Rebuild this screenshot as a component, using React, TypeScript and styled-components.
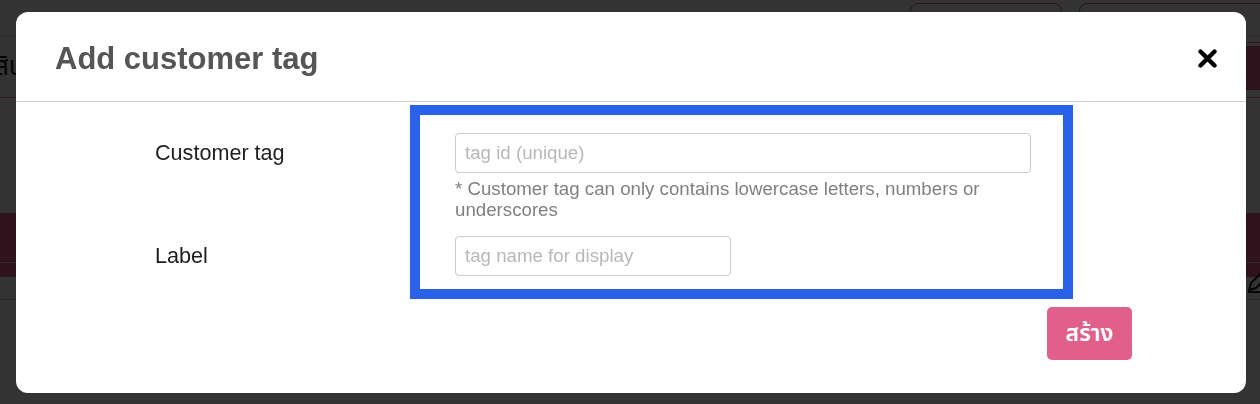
import React from "react";
import styled, { createGlobalStyle } from "styled-components";

// Global ------------------------------------------------------------------------

const GlobalStyle = createGlobalStyle`
  html, body {
    margin: 0;
    padding: 0;
    width: 1260px;
    height: 404px;
    overflow: hidden;
    background: #ffffff;
    font-family: "Liberation Sans", Arial, sans-serif;
  }
  * {
    box-sizing: border-box;
  }
`;

// Component ---------------------------------------------------------------------

const CloseIcon: React.FC = () => (
  <svg width="19" height="19" viewBox="0 0 19 19">
    <path d="M2.5 2.5 L16.5 16.5 M16.5 2.5 L2.5 16.5" stroke="#000" strokeWidth="4.4" strokeLinecap="round" />
  </svg>
);

const PenIcon: React.FC = () => (
  <svg width="24" height="24" viewBox="0 0 24 24" fill="none" stroke="#222" strokeWidth="2">
    <path d="M3 21 L5 14 L17 2 L22 7 L10 19 Z" />
    <path d="M2 23 H22" />
  </svg>
);

const App: React.FC = () => {
  return (
    <>
      <GlobalStyle />
      <Page>
        <TopBar>
          <OutlineButton width={152}>Export</OutlineButton>
          <OutlineButton width={190}>Import tags</OutlineButton>
        </TopBar>
        <Toolbar>
          <PageTitle>สินค้า</PageTitle>
          <PrimaryButton />
        </Toolbar>
        <Band />
        <TableRow>
          <span />
          <PenIcon />
        </TableRow>
        <BottomRow>
          <Cell width={520}>? ........ ...l..... Ud..l..</Cell>
          <Cell width={300}>NaplMo...ldBD</Cell>
        </BottomRow>
      </Page>

      <Overlay>
        <Modal>
          <Header>
            <Title>Add customer tag</Title>
            <CloseButton>
              <CloseIcon />
            </CloseButton>
          </Header>

          <Body>
            <Labels>
              <LabelRow>Customer tag</LabelRow>
              <LabelRow gap={63}>Label</LabelRow>
            </Labels>

            <Highlight>
              <Field>
                <Input width={576} placeholder="tag id (unique)" />
                <Help>* Customer tag can only contains lowercase letters, numbers or underscores</Help>
              </Field>
              <Field gap={16}>
                <Input width={276} placeholder="tag name for display" />
              </Field>
            </Highlight>
          </Body>

          <Footer>
            <SubmitButton>สร้าง</SubmitButton>
          </Footer>
        </Modal>
      </Overlay>
    </>
  );
};

export default App;

// Styled: page behind -------------------------------------------------------------

const Page = styled.div`
  width: 1260px;
  height: 404px;
  display: flex;
  flex-direction: column;
  background: #fff;
  color: #222;
`;

const TopBar = styled.div`
  height: 36px;
  display: flex;
  justify-content: flex-end;
  gap: 17px;
  padding: 3px 0 0;
  margin-right: -9px;
  border-bottom: 1px solid #e2e2e2;
`;

const OutlineButton = styled.div<{ width: number }>`
  width: ${({ width }) => width}px;
  height: 40px;
  border: 1px solid #e05f8b;
  border-radius: 8px;
  display: flex;
  align-items: center;
  justify-content: center;
  color: #e05f8b;
  font-size: 18px;
`;

const Toolbar = styled.div`
  height: 62px;
  display: flex;
  align-items: center;
  justify-content: space-between;
  border-bottom: 1px solid #e9a7bd;
`;

const PageTitle = styled.div`
  font-size: 26px;
  font-family: "Noto Sans Thai", "Liberation Sans", sans-serif;
  margin-left: -6px;
`;

const PrimaryButton = styled.div`
  width: 90px;
  height: 44px;
  margin-top: 3px;
  margin-right: -60px;
  border-radius: 8px;
  background: #e05f8b;
`;

const Band = styled.div`
  height: 64px;
  margin-top: 115px;
  background: #e65a8c;
`;

const TableRow = styled.div`
  height: 38px;
  margin-top: -15px;
  display: flex;
  justify-content: space-between;
  align-items: center;
  margin-right: -10px;
  border-top: 1px solid #d6d6d6;
  border-bottom: 1px solid #d6d6d6;
`;

const BottomRow = styled.div`
  display: flex;
  padding: 52px 0 0 170px;
  font-size: 20px;
`;

const Cell = styled.div<{ width: number }>`
  width: ${({ width }) => width}px;
  white-space: nowrap;
`;

// Styled: modal ---------------------------------------------------------------------

const Overlay = styled.div`
  position: fixed;
  inset: 0;
  background: rgba(0, 0, 0, 0.8);
  padding: 12px 0 0 16px;
`;

const Modal = styled.div`
  width: 1230px;
  background: #fff;
  border-radius: 12px;
  overflow: hidden;
`;

const Header = styled.div`
  height: 90px;
  display: flex;
  align-items: center;
  justify-content: space-between;
  padding: 0 29px 0 39px;
  border-bottom: 1px solid #cccccc;
`;

const Title = styled.h2`
  margin: 0;
  padding-top: 4px;
  font-size: 31px;
  font-weight: 700;
  color: #555555;
`;

const CloseButton = styled.div`
  display: flex;
  margin-top: 4px;
  cursor: pointer;
`;

const Body = styled.div`
  display: grid;
  grid-template-columns: 394px 663px;
  padding-top: 3px;
`;

const Labels = styled.div`
  display: flex;
  flex-direction: column;
  padding: 28px 0 0 139px;
`;

const LabelRow = styled.div<{ gap?: number }>`
  height: 40px;
  margin-top: ${({ gap }) => gap ?? 0}px;
  display: flex;
  align-items: center;
  font-size: 21.6px;
  color: #1e1e1e;
`;

const Highlight = styled.div`
  border: 10px solid #2962e8;
  padding: 18px 32px 13px 35px;
  display: flex;
  flex-direction: column;
`;

const Field = styled.div<{ gap?: number }>`
  display: flex;
  flex-direction: column;
  margin-top: ${({ gap }) => gap ?? 0}px;
`;

const Input = styled.input<{ width: number }>`
  width: ${({ width }) => width}px;
  height: 40px;
  border: 1px solid #cccccc;
  border-radius: 4px;
  padding: 0 9px;
  font-family: "Liberation Sans", Arial, sans-serif;
  font-size: 18.7px;
  color: #333;
  outline: none;

  &::placeholder {
    color: #b8b8b8;
  }
`;

const Help = styled.div`
  margin-top: 5px;
  width: 560px;
  font-size: 18.7px;
  line-height: 21px;
  color: #808080;
`;

const Footer = styled.div`
  display: flex;
  justify-content: flex-end;
  padding: 8px 114px 33px 0;
`;

const SubmitButton = styled.button`
  width: 85px;
  height: 53px;
  border: none;
  border-radius: 5px;
  background: #e05f8b;
  color: #ffffff;
  font-family: "Noto Sans Thai", "Leelawadee UI", Tahoma, "Liberation Sans", sans-serif;
  font-size: 23px;
  font-weight: 600;
  cursor: pointer;
`;
